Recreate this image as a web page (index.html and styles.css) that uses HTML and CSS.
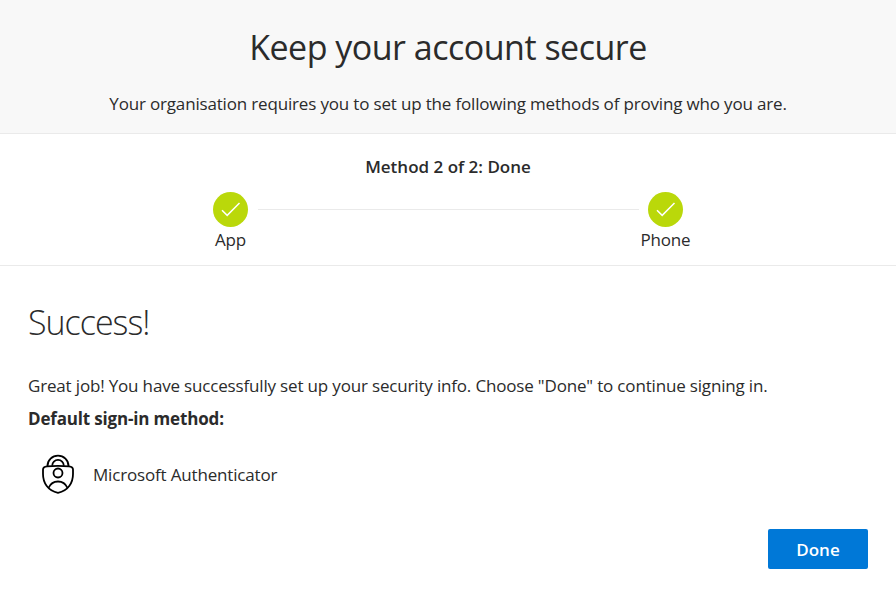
FILE: index.html
```html
<!DOCTYPE html>
<html lang="en">
<head>
  <meta charset="UTF-8">
  <title>Keep your account secure</title>
  <link rel="stylesheet" href="styles.css">
</head>
<body>
  <header class="page-header">
    <h1>Keep your account secure</h1>
    <p>Your organisation requires you to set up the following methods of proving who you are.</p>
  </header>

  <section class="progress">
    <h2>Method 2 of 2: Done</h2>
    <div class="steps">
      <div class="step">
        <svg class="check" viewBox="0 0 36 36"><circle cx="17.5" cy="18.5" r="17.5"/><path d="M9 19.2l5.2 5.2L26.5 12"/></svg>
        <span>App</span>
      </div>
      <div class="line"></div>
      <div class="step">
        <svg class="check" viewBox="0 0 36 36"><circle cx="17.5" cy="18.5" r="17.5"/><path d="M9 19.2l5.2 5.2L26.5 12"/></svg>
        <span>Phone</span>
      </div>
    </div>
  </section>

  <main class="content">
    <h2>Success!</h2>
    <p class="message">Great job! You have successfully set up your security info. Choose "Done" to continue signing in.</p>
    <p class="default">Default sign-in method:</p>
    <div class="method">
      <svg class="auth-icon" viewBox="0 0 34 40">
        <path d="M6 12.3Q17 11.3 28 12.3Q32 12.7 32 15.5V20C32 28.5 27.5 36.5 17 38.8C6.500 36.500 2 28.500 2 20V15.500Q2 12.700 6 12.300z"/>
        <path d="M6.500 12a10.500 10.300 0 0 1 21 0M11.200 11.700a5.800 5.800 0 0 1 11.600 0"/>
        <circle cx="17" cy="19" r="4.500"/>
        <path d="M7.500 34C9.500 29.500 13 27.500 17 27.500S24.500 29.500 26.500 34"/>
      </svg>
      <span>Microsoft Authenticator</span>
    </div>
    <div class="actions">
      <button type="button">Done</button>
    </div>
  </main>
</body>
</html>
```
FILE: styles.css
```css
* { box-sizing: border-box; }
body { margin: 0; background: #fff; color: #2b2b2b; font-family: "Segoe UI", "Open Sans", "Noto Sans", sans-serif; font-size: 17px; letter-spacing: -0.17px; }
h1, h2, p { margin: 0; font-weight: 400; }
.page-header { height: 134px; padding-top: 23px; background: #f8f8f8; border-bottom: 1px solid #eaeaea; text-align: center; }
.page-header h1 { font-size: 34px; line-height: 48px; letter-spacing: -0.5px; }
.page-header p { margin-top: 21px; line-height: 24px; }
.progress { height: 132px; padding-top: 21px; border-bottom: 1px solid #eaeaea; }
.progress h2 { font-size: 17px; font-weight: 600; line-height: 24px; letter-spacing: 0; text-align: center; }
.steps { display: flex; justify-content: center; margin-top: 12px; }
.step { display: flex; flex-direction: column; align-items: center; width: 54px; line-height: 26px; }
.check { width: 36px; height: 36px; fill: #bad80a; }
.check path { fill: none; stroke: #fff; stroke-width: 1.5; }
.line { width: 381px; height: 1px; margin-top: 18px; background: #eaeaea; }
.content { padding: 32px 28px 0; }
.content h2 { font-size: 34px; font-weight: 300; line-height: 48px; letter-spacing: -1px; }
.message { margin-top: 28px; line-height: 24px; }
.default { margin-top: 9px; font-weight: 700; line-height: 24px; }
.method { display: flex; align-items: center; margin-top: 23px; padding-left: 13px; gap: 18px; }
.auth-icon { width: 34px; height: 40px; fill: none; stroke: #000; stroke-width: 1.8; }
.actions { display: flex; justify-content: flex-end; margin-top: 35px; }
button { width: 100px; height: 40px; border: 0; border-radius: 2px; background: #0078d7; color: #fff; font: 600 17px "Segoe UI", "Open Sans", sans-serif; }
```
